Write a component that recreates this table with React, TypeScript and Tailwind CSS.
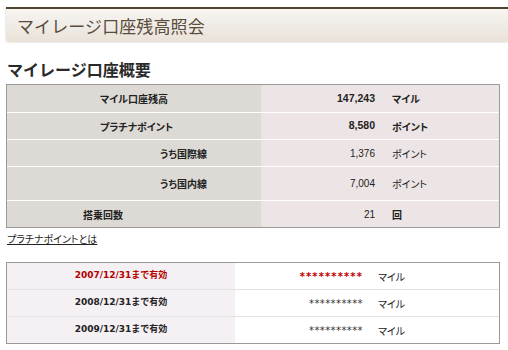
import React from "react";

const jp = "font-['Noto_Sans_CJK_JP',sans-serif]";
const palt = "[font-feature-settings:'palt']";

type Row = {
  label: string;
  pad: string;
  h: string;
  num: string;
  unit: string;
  bold: boolean;
};

const rows: Row[] = [
  { label: "マイル口座残高", pad: "pl-[93px]", h: "h-[27px]", num: "147,243", unit: "マイル", bold: true },
  { label: "プラチナポイント", pad: "pl-[93px]", h: "h-[26px]", num: "8,580", unit: "ポイント", bold: true },
  { label: "うち国際線", pad: "pl-[153px]", h: "h-[26px]", num: "1,376", unit: "ポイント", bold: false },
  { label: "うち国内線", pad: "pl-[153px]", h: "h-[33px]", num: "7,004", unit: "ポイント", bold: false },
  { label: "搭乗回数", pad: "pl-[76px]", h: "h-[26px]", num: "21", unit: "回", bold: false },
];

const dates = [
  { d: "2007/12/31まで有効", red: true },
  { d: "2008/12/31まで有効", red: false },
  { d: "2009/12/31まで有効", red: false },
];

export default function App() {
  return (
    <div className={`w-[508px] h-[350px] bg-white overflow-hidden ${jp}`}>
      {/* Header */}
      <div className="pt-[7px] pl-[6px]">
        <div className="h-[35px] border-t-2 border-[#4e4430] rounded-bl-[4px] bg-gradient-to-b from-[#f8f5f0] via-[#efebe6] to-[#eae2d7] flex items-center pl-[11px] shadow-[-1px_1px_1px_rgba(0,0,0,0.08)]">
          <span className="text-[17px] leading-none text-[#5a4c3d] tracking-[0.1px]">
            マイレージ口座残高照会
          </span>
        </div>
      </div>

      {/* Section title */}
      <div className="pl-[7px] mt-[18px] h-[24px] flex items-start">
        <span className="text-[16px] leading-[18px] font-bold text-[#2a2a2a]">マイレージ口座概要</span>
      </div>

      {/* Table 1 */}
      <div className="ml-[6px] w-[494px] border border-[#9a9a9a] flex flex-col">
        {rows.map((r, i) => (
          <div
            key={i}
            className={`flex ${r.h} ${i < rows.length - 1 ? "border-b border-white" : ""} box-content`}
          >
            <div className={`w-[254px] bg-[#dddad5] flex items-center ${r.pad}`}>
              <span className={`text-[10px] font-bold text-[#222] ${palt}`}>{r.label}</span>
            </div>
            <div className="w-[2px] bg-[#e8e5e1]" />
            <div className="flex-1 bg-[#ede5e5] flex items-center">
              <span
                className={`w-[112px] text-right font-['Liberation_Sans',sans-serif] text-[#222] ${
                  r.bold ? "text-[10.5px] font-bold" : "text-[10px]"
                }`}
              >
                {r.num}
              </span>
              <span
                className={`ml-[17px] text-[10px] text-[#222] ${palt} ${r.bold || r.unit === "回" ? "font-bold" : ""}`}
              >
                {r.unit}
              </span>
            </div>
          </div>
        ))}
      </div>

      {/* Link */}
      <div className="pl-[7px] mt-[5px] h-[14px] text-[10px] leading-[12px] flex items-start">
        <a className={`text-[10px] leading-[12px] text-[#222] underline ${palt}`}>プラチナポイントとは</a>
      </div>

      {/* Table 2 */}
      <div className="ml-[6px] mt-[15px] w-[494px] border border-[#9a9a9a] flex flex-col">
        {dates.map((r, i) => (
          <div
            key={i}
            className={`flex h-[26px] box-content ${i < dates.length - 1 ? "border-b border-[#e2e2e2]" : ""}`}
          >
            <div className="w-[228px] bg-[#f5f0f3] flex items-center justify-center">
              <span
                className={`text-[9px] font-bold font-['DejaVu_Sans','Noto_Sans_CJK_JP',sans-serif] ${
                  r.red ? "text-[#b30000]" : "text-[#222]"
                }`}
              >
                {r.d}
              </span>
            </div>
            <div className="flex-1 bg-white flex items-center">
              <span
                className={`w-[128px] text-right font-['DejaVu_Sans',sans-serif] text-[10px] ${
                  r.red ? "text-[#c00000] font-bold tracking-[1.1px]" : "text-[#333] tracking-[0.4px]"
                }`}
              >
                **********
              </span>
              <span className={`ml-[15px] text-[10px] text-[#222] ${palt}`}>マイル</span>
            </div>
          </div>
        ))}
      </div>
    </div>
  );
}
